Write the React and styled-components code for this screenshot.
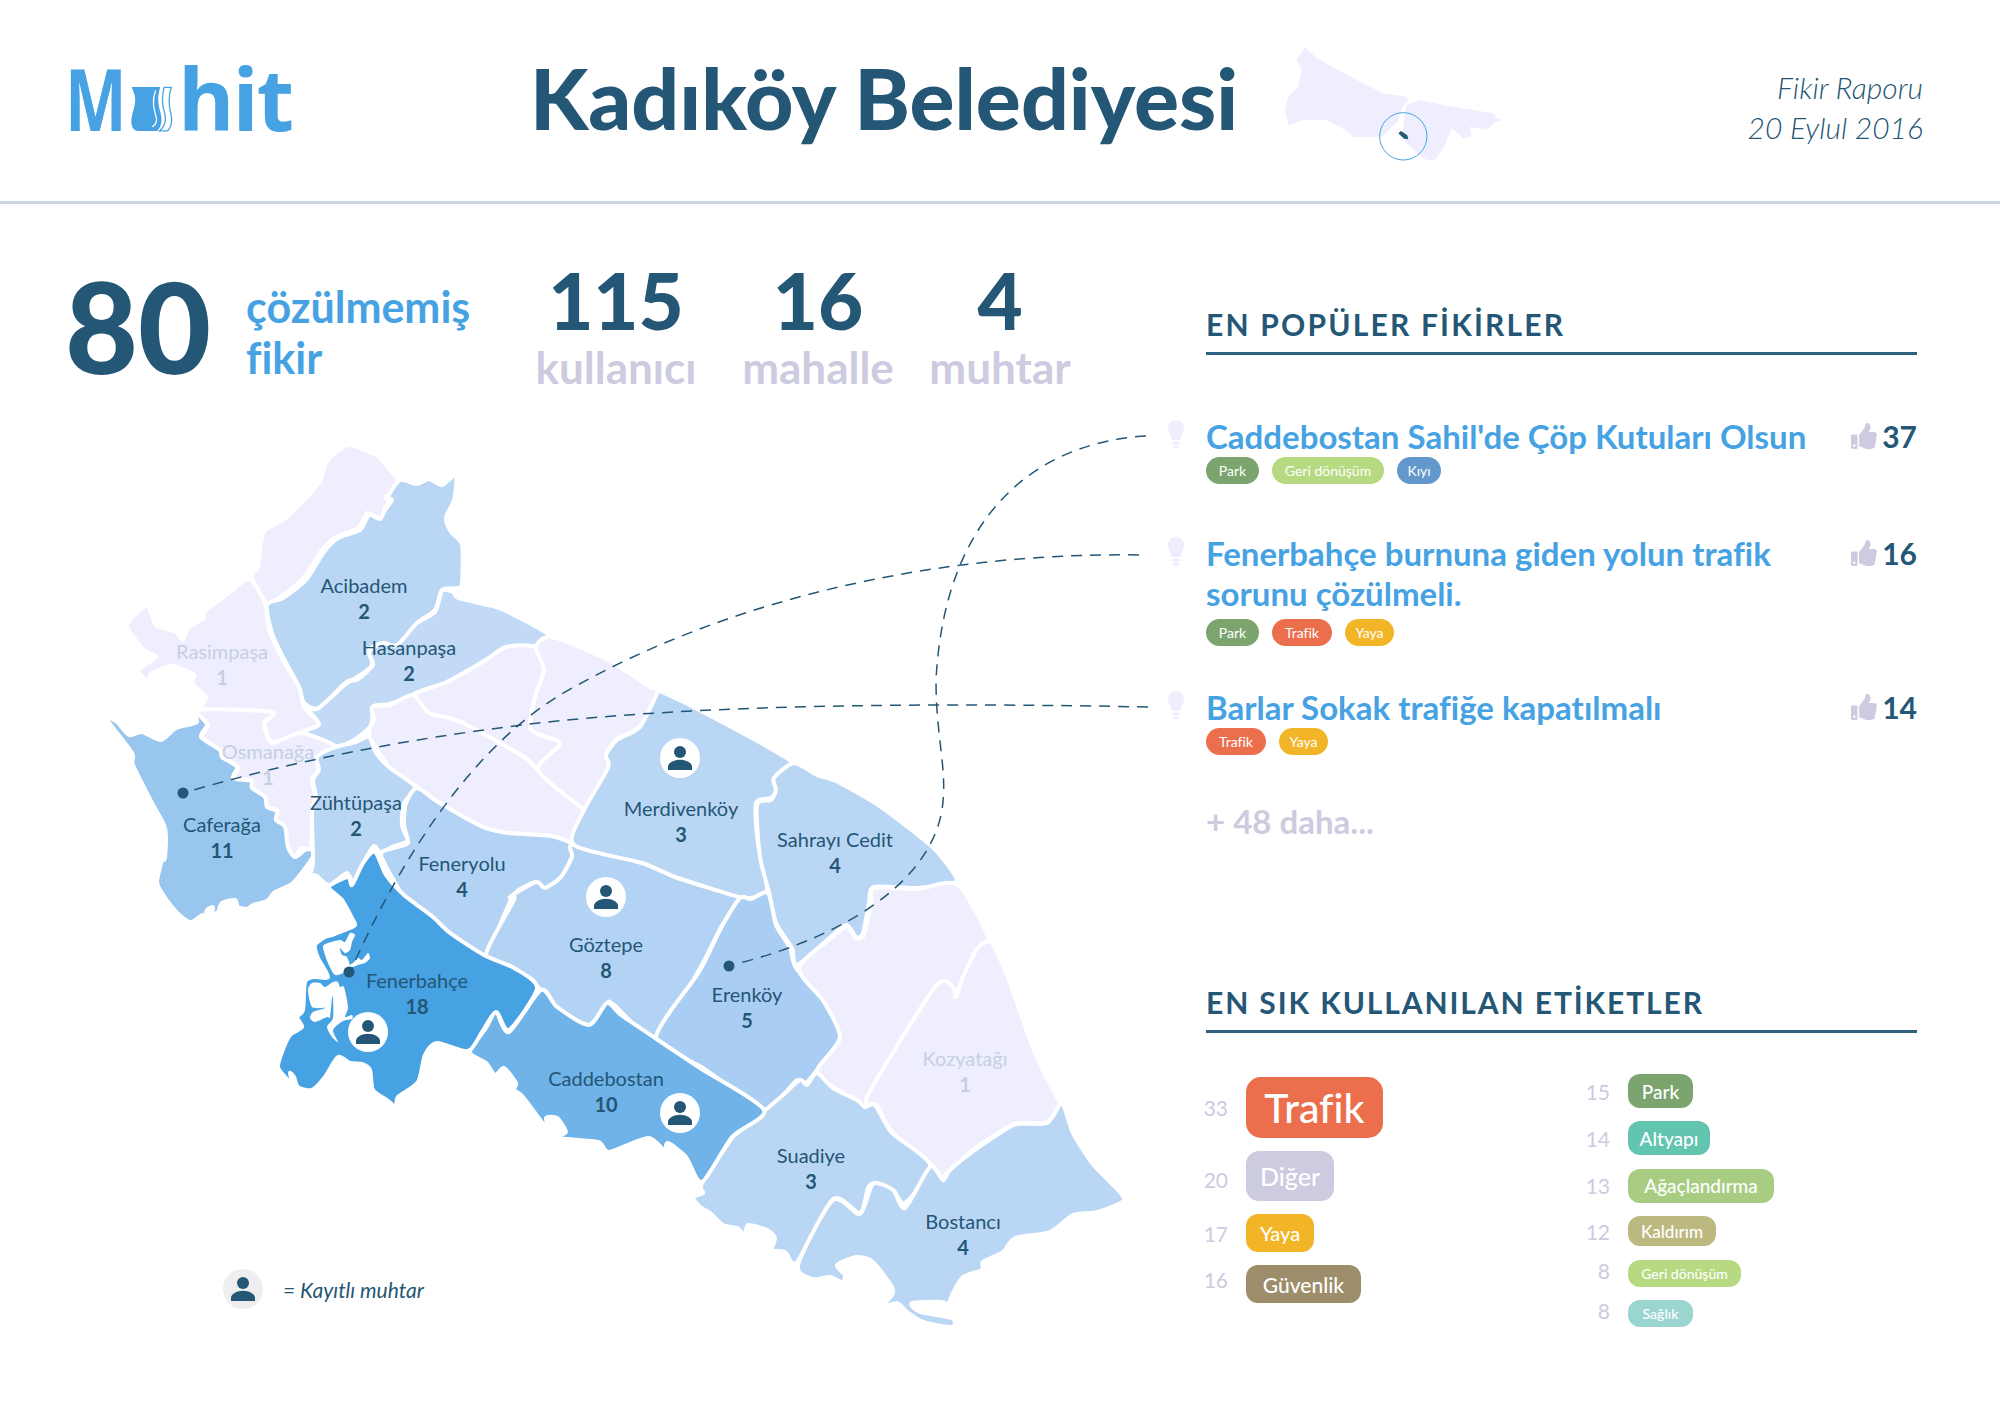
import React from "react";
import styled, { createGlobalStyle } from "styled-components";
import { FaThumbsUp } from "react-icons/fa";

const NAVY = "#245675";
const BLUE = "#46A2E2";
const LILAC = "#CCCBE0";
const PALE = "#EEEEFE";
const SANS = `"Lato", "Noto Sans", sans-serif`;

const Global = createGlobalStyle`
  html, body { margin: 0; padding: 0; background: #fff; }
  body { font-family: ${SANS}; color: ${NAVY}; font-variant-ligatures: none; }
`;

const Page = styled.div`
  width: 2000px;
  height: 1414px;
  overflow: hidden;
`;

/* header */
const Header = styled.header`
  height: 201px;
  display: flex;
  align-items: center;
  padding: 0 77px 0 65px;
  border-bottom: 3px solid #c7d5e3;
`;
const Logo = styled.div`
  width: 465px;
  height: 86px;
  display: flex;
  align-items: flex-end;
  color: ${BLUE};
  font-family: "Open Sans", sans-serif;
  font-weight: 700;
  font-size: 86px;
  line-height: 86px;
  letter-spacing: -2px;
  position: relative;
  top: -3px;
`;
const LogoM = styled.span`
  display: inline-block;
  width: 65px;
  transform: scaleX(0.76);
  transform-origin: 0 50%;
`;
const LogoGlass = styled.svg`
  width: 43px;
  height: 48px;
  margin: 0 5px 8px 0;
`;
const Title = styled.h1`
  width: 740px;
  margin: 0;
  font-size: 84px;
  line-height: 90px;
  font-weight: 900;
  white-space: nowrap;
  position: relative;
  top: -3px;
`;
const MiniMap = styled.svg`
  width: 260px;
  height: 140px;
  position: relative;
  top: -1px;
  flex: none;
`;
const ReportInfo = styled.div`
  margin-left: auto;
  text-align: right;
  font-size: 30px;
  line-height: 40px;
  font-weight: 300;
  font-style: italic;
  white-space: nowrap;
  position: relative;
  top: 6px;
`;

/* main grid */
const Body = styled.main`
  display: grid;
  grid-template-columns: 1168px 749px;
`;
const LeftColumn = styled.div`
  width: 1168px;
`;
const StatsRow = styled.div`
  height: 226px;
  display: flex;
  align-items: flex-start;
  padding-left: 65px;
`;
const BigCount = styled.div`
  width: 181px;
  margin-top: 57px;
  font-size: 126px;
  line-height: 130px;
  font-weight: 900;
`;
const BigLabel = styled.div`
  width: 289px;
  margin-top: 77px;
  color: ${BLUE};
  font-size: 43px;
  line-height: 51px;
  font-weight: 700;
`;
const StatGrid = styled.div`
  display: grid;
  grid-template-columns: 162px 242px 122px;
  justify-items: center;
  margin-top: 52px;
`;
const Stat = styled.div`
  display: flex;
  flex-direction: column;
  align-items: center;
`;
const StatValue = styled.div`
  font-size: 78px;
  line-height: 88px;
  font-weight: 900;
`;
const StatName = styled.div`
  color: ${LILAC};
  font-size: 44px;
  line-height: 46px;
  font-weight: 700;
  white-space: nowrap;
`;

/* map canvas: svg uses page coordinates, labels sit on it */
const MapCanvas = styled.div`
  position: relative;
  width: 1168px;
  height: 984px;
`;
const MapSvg = styled.svg`
  position: absolute;
  left: 0;
  top: 0;
  overflow: visible;
`;
const Label = styled.div`
  position: absolute;
  left: ${(p) => p.$x}px;
  top: ${(p) => p.$y - 430 - 14}px;
  transform: translateX(-50%);
  text-align: center;
  white-space: nowrap;
  font-size: 20px;
  line-height: 26px;
  color: ${(p) => (p.$muted ? "#C5D0E3" : NAVY)};
  b {
    display: block;
    font-weight: 700;
    font-size: 20px;
  }
`;
const Badge = styled.div`
  width: 40px;
  height: 40px;
  border-radius: 50%;
  background: ${(p) => p.$bg || "#fff"};
  display: flex;
  align-items: center;
  justify-content: center;
  flex: none;
`;
const Pin = styled.div`
  position: absolute;
  left: ${(p) => p.$x - 20}px;
  top: ${(p) => p.$y - 430 - 20}px;
`;
const Legend = styled.div`
  position: absolute;
  left: 223px;
  top: 839px;
  display: flex;
  align-items: center;
  gap: 20px;
  font-size: 21px;
  font-weight: 400;
  font-style: italic;
`;

/* right column */
const RightColumn = styled.aside`
  padding-top: 100px;
`;
const SectionTitle = styled.h2`
  margin: ${(p) => p.$top || 0}px 0 0 38px;
  height: 48px;
  border-bottom: 3px solid #2f607f;
  font-size: 30px;
  line-height: 40px;
  font-weight: 700;
  letter-spacing: ${(p) => p.$spacing || 2.2}px;
  white-space: nowrap;
`;
const IdeaList = styled.div`
  margin-top: 62px;
`;
const Idea = styled.article`
  display: grid;
  grid-template-columns: 38px 1fr 66px;
  margin-top: ${(p) => p.$top || 0}px;
`;
const Bulb = styled.svg`
  width: 16px;
  height: 29px;
  margin-top: 3px;
`;
const IdeaBody = styled.div`
  min-width: 0;
`;
const IdeaTitle = styled.h3`
  margin: 0;
  color: ${BLUE};
  font-size: 33px;
  line-height: 40px;
  font-weight: 700;
  position: relative;
  top: -1px;
`;
const PillRow = styled.div`
  display: flex;
  gap: 13px;
  margin-top: ${(p) => p.$top || 0}px;
`;
const Pill = styled.span`
  width: ${(p) => p.$w}px;
  height: 27px;
  border-radius: 14px;
  background: ${(p) => p.$bg};
  color: #fff;
  font-size: 14px;
  font-weight: 400;
  display: flex;
  align-items: center;
  justify-content: center;
  white-space: nowrap;
`;
const Likes = styled.div`
  display: flex;
  align-items: center;
  justify-content: space-between;
  height: 38px;
  font-size: 30px;
  font-weight: 700;
  svg {
    color: ${LILAC};
    width: 26px;
    height: 26px;
  }
`;
const More = styled.div`
  margin: 46px 0 0 38px;
  color: ${LILAC};
  font-size: 33px;
  line-height: 40px;
  font-weight: 700;
`;
const TagColumns = styled.div`
  display: grid;
  grid-template-columns: 364px auto;
  margin: 41px 0 0 38px;
`;
const TagColumn = styled.div`
  display: flex;
  flex-direction: column;
  gap: ${(p) => p.$gap}px;
  padding-top: ${(p) => p.$top || 0}px;
`;
const TagRow = styled.div`
  display: flex;
  align-items: center;
  gap: 18px;
`;
const Count = styled.span`
  width: ${(p) => p.$w}px;
  display: flex;
  justify-content: flex-end;
  color: ${LILAC};
  font-size: 21px;
  position: relative;
  top: ${(p) => p.$shift || 0}px;
`;
const Tag = styled.span`
  width: ${(p) => p.$w}px;
  height: ${(p) => p.$h}px;
  border-radius: ${(p) => p.$r}px;
  background: ${(p) => p.$bg};
  color: #fff;
  font-size: ${(p) => p.$size}px;
  font-weight: 500;
  display: flex;
  align-items: center;
  justify-content: center;
  white-space: nowrap;
`;

// region outlines in page coordinates, traced from the map
const REGIONS = [
  { fill: PALE, pts: "350,445 336,452 326,463 319,483 301,503 283,520 265,530 261,543 258,567 252,577 267,603 283,595 304,577 322,550 336,537 358,528 367,513 381,518 385,508 390,500 386,497 399,482 383,462 376,455" },
  { fill: "#BAD6F5", pts: "267,605 283,598 306,580 324,552 338,538 360,530 369,515 380,519 385,510 392,500 388,497 400,480 417,484 429,479 442,485 456,475 454,500 446,518 451,532 462,545 462,583 458,588 442,590 435,610 417,623 397,647 383,643 369,650 372,665 356,678 345,683 319,708 304,703 299,687 283,657 272,633" },
  { fill: "#C2DAF6", pts: "453,592 458,598 483,604 504,610 549,635 535,646 506,647 486,660 447,682 413,695 390,704 374,706 372,720 369,728 354,740 336,746 304,732 319,724 304,705 317,709 347,683 358,679 373,665 369,652 383,643 397,645 417,623 435,612 442,591" },
  { fill: PALE, pts: "249,579 265,603 269,630 283,660 299,687 304,707 319,724 301,732 272,742 265,723 272,712 204,710 206,697 192,683 194,675 172,666 152,673 147,680 138,670 156,657 144,650 127,625 147,606 156,625 176,632 183,640 188,628 204,618 204,612 229,593" },
  { fill: PALE, pts: "199,710 272,712 264,723 272,743 301,733 336,747 322,760 317,760 318,770 312,780 315,797 312,813 311,848 301,848 295,857 288,847 285,827 276,820 277,810 267,807 265,797 252,788 251,780 233,778 238,767 222,757 220,750 202,737 208,725" },
  { fill: "#99C6EF", pts: "192,709 199,715 207,725 201,737 220,750 222,757 237,767 233,778 251,781 252,788 265,797 267,807 277,811 276,820 285,827 288,847 295,857 305,850 312,850 313,857 293,883 275,892 267,901 253,905 247,909 238,907 235,900 222,903 218,912 212,914 213,907 207,910 205,917 202,915 192,922 183,918 172,907 162,893 157,882 162,860 165,858 165,828 152,803 133,765 132,753 106,718 117,722 129,735 142,732 161,740 176,728 197,722" },
  { fill: PALE, pts: "413,695 447,682 486,660 506,647 535,647 544,670 535,697 531,730 560,743 538,768 524,757 461,722 429,713" },
  { fill: PALE, pts: "372,707 390,705 413,695 429,713 461,722 524,757 538,770 583,810 572,843 551,836 508,833 483,827 438,802 417,787 390,768 369,735 374,720" },
  { fill: PALE, pts: "552,637 608,660 650,687 658,690 640,726 617,739 606,755 608,768 583,812 583,809 538,770 560,743 531,730 535,697 544,670 536,647" },
  { fill: "#BAD6F5", pts: "317,757 333,748 356,742 369,737 376,753 390,768 415,787 404,803 402,825 408,840 404,843 392,847 381,853 374,846 365,860 354,884 347,873 329,885 315,875 308,880 313,863 312,813 316,797 313,780 319,770" },
  { fill: "#B3D3F5", pts: "417,788 438,802 483,827 508,833 551,836 574,845 572,857 561,877 545,888 536,882 515,893 502,920 486,955 450,933 429,917 407,900 401,893 381,855 394,848 408,843 404,825 406,803" },
  { fill: "#B3D3F5", pts: "574,845 642,863 678,878 739,897 721,927 699,970 656,1037 614,1005 607,1003 589,1025 557,1007 541,990 514,968 486,955 514,900 510,897 536,882 545,888 561,877 572,857" },
  { fill: "#BAD6F5", pts: "662,692 703,712 792,762 774,778 776,790 771,798 756,803 758,843 767,890 751,898 739,897 678,878 642,863 574,845 583,812 608,768 606,755 617,740 640,727 658,692" },
  { fill: "#BAD6F5", pts: "794,763 817,775 838,782 881,807 928,843 944,860 956,882 917,888 874,887 869,903 863,933 856,937 847,925 835,933 797,965 792,948 776,923 769,892 760,857 757,805 771,800 776,790 774,778" },
  { fill: "#AACEF3", pts: "740,898 751,899 768,893 776,925 790,948 796,968 824,1000 840,1037 819,1067 806,1083 797,1080 785,1093 764,1110 703,1068 656,1038 699,972 721,928" },
  { fill: PALE, pts: "958,885 990,942 978,948 963,977 956,995 953,987 935,987 871,1095 865,1107 846,1095 817,1072 840,1038 824,1002 799,968 835,935 847,926 856,938 864,935 871,903 874,888 917,889" },
  { fill: PALE, pts: "992,943 1010,983 1035,1053 1060,1103 1062,1102 1047,1122 1017,1123 1000,1132 975,1148 947,1173 943,1180 932,1165 892,1132 877,1105 868,1095 935,987 953,987 956,997 963,977 978,948" },
  { fill: "#BAD6F5", pts: "817,1073 833,1088 857,1100 865,1107 875,1105 892,1133 930,1165 905,1203 893,1190 875,1183 868,1188 860,1213 833,1199 797,1262 785,1252 772,1250 775,1238 767,1230 748,1225 745,1235 737,1228 723,1225 710,1213 700,1207 693,1197 703,1193 702,1183 732,1138 735,1135 763,1112 783,1095 800,1080 807,1085" },
  { fill: "#BAD6F5", pts: "930,1167 943,1180 950,1170 975,1150 1000,1133 1017,1124 1047,1123 1062,1104 1073,1133 1092,1163 1110,1182 1124,1200 1098,1212 1073,1215 1050,1232 1015,1238 1003,1252 983,1262 982,1270 963,1277 953,1293 948,1305 942,1302 912,1303 920,1312 952,1318 952,1327 923,1322 907,1312 897,1303 882,1307 892,1295 892,1287 873,1262 857,1257 837,1265 845,1275 842,1282 830,1277 813,1279 798,1265 833,1200 860,1214 873,1184 893,1190 905,1208" },
  { fill: "#6FB3E9", pts: "541,990 557,1007 589,1025 607,1003 621,1015 655,1038 700,1068 764,1110 732,1137 702,1182 686,1157 668,1143 664,1150 648,1138 609,1152 598,1142 557,1138 566,1132 557,1118 546,1118 548,1130 523,1097 514,1090 516,1083 504,1068 495,1075 486,1063 470,1052 486,1028 496,1012 509,1032" },
  { fill: BLUE, pts: "329,887 348,877 352,885 363,863 375,852 386,875 404,895 433,917 450,933 484,955 514,968 537,988 509,1030 496,1012 482,1032 468,1051 437,1043 425,1055 418,1082 398,1097 396,1107 387,1100 373,1090 370,1070 362,1064 350,1063 338,1057 325,1077 312,1090 298,1087 294,1077 290,1073 292,1083 285,1077 278,1067 282,1052 290,1035 302,1027 297,1017 303,1010 305,982 313,977 328,977 318,958 315,945 325,937 332,935 350,928 355,925 353,920 342,900" },
];

// white harbour cut-outs inside Fenerbahce
const HARBOURS = [
  "328,943 340,940 345,942 350,933 355,935 352,942 350,950 345,953 340,948 342,955 347,957 350,967 345,972 335,975 328,963 323,947",
  "350,965 353,963 358,958 362,960 368,953 370,958 365,963 358,965 350,968",
  "312,983 308,990 312,1007 325,1008 313,1012 310,1018 315,1022 327,1017 330,1017 332,998 333,998 333,1018 327,1027 332,1037 338,1042 333,1030 343,1021 352,1019 352,1015 345,1017 348,1007 344,987 340,987 338,982 333,982 325,987 320,983",
];

// closed catmull-rom through the traced points
function outline(str) {
  const p = str.split(" ").map((s) => s.split(",").map(Number));
  const n = p.length;
  let d = `M${p[0][0]} ${p[0][1]}`;
  for (let i = 0; i < n; i++) {
    const a = p[(i - 1 + n) % n];
    const b = p[i];
    const c = p[(i + 1) % n];
    const e = p[(i + 2) % n];
    const k = 1 / 8;
    const c1 = [b[0] + (c[0] - a[0]) * k, b[1] + (c[1] - a[1]) * k];
    const c2 = [c[0] - (e[0] - b[0]) * k, c[1] - (e[1] - b[1]) * k];
    d += ` C${c1[0]} ${c1[1]} ${c2[0]} ${c2[1]} ${c[0]} ${c[1]}`;
  }
  return d + "Z";
}

const LINKS = [
  "M1146 436 C1040 442 945 510 936 680 C936 740 948 770 942 810 C930 880 850 935 736 964",
  "M1139 555 C960 552 740 590 560 695 C470 750 400 860 351 970",
  "M1148 707 C950 703 700 703 522 725 C400 740 290 762 190 791",
];

const DOTS = [
  [183, 793],
  [349, 972],
  [729, 966],
];

const LABELS = [
  ["Acibadem", 2, 364, 586],
  ["Rasimpaşa", 1, 222, 652, true],
  ["Osmanağa", 1, 268, 752, true],
  ["Hasanpaşa", 2, 409, 648],
  ["Zühtüpaşa", 2, 356, 803],
  ["Caferağa", 11, 222, 825],
  ["Feneryolu", 4, 462, 864],
  ["Merdivenköy", 3, 681, 809],
  ["Sahrayı Cedit", 4, 835, 840],
  ["Göztepe", 8, 606, 945],
  ["Erenköy", 5, 747, 995],
  ["Caddebostan", 10, 606, 1079],
  ["Fenerbahçe", 18, 417, 981],
  ["Kozyatağı", 1, 965, 1059, true],
  ["Suadiye", 3, 811, 1156],
  ["Bostancı", 4, 963, 1222],
];

const MUHTARS = [
  [680, 758],
  [606, 897],
  [680, 1113],
  [368, 1032],
];

const TAG = {
  Park: { w: 53, bg: "#7CA46F" },
  Geri: { w: 112, bg: "#B6D982", text: "Geri dönüşüm" },
  Kiyi: { w: 44, bg: "#6398CC", text: "Kıyı" },
  Trafik: { w: 60, bg: "#EC6F4D" },
  Yaya: { w: 49, bg: "#F3B528" },
};

const IDEAS = [
  { title: "Caddebostan Sahil'de Çöp Kutuları Olsun", likes: 37, tags: ["Park", "Geri", "Kiyi"] },
  { title: "Fenerbahçe burnuna giden yolun trafik sorunu çözülmeli.", likes: 16, tags: ["Park", "Trafik", "Yaya"], top: 50, pillTop: 5 },
  { title: "Barlar Sokak trafiğe kapatılmalı", likes: 14, tags: ["Trafik", "Yaya"], top: 42 },
];

const LEFT_TAGS = [
  { n: 33, name: "Trafik", w: 137, h: 61, r: 15, size: 41, bg: "#EC6F4D" },
  { n: 20, name: "Diğer", w: 88, h: 50, r: 13, size: 25, bg: LILAC, shift: 3 },
  { n: 17, name: "Yaya", w: 68, h: 38, r: 12, size: 20, bg: "#F3B528" },
  { n: 16, name: "Güvenlik", w: 115, h: 38, r: 12, size: 21, bg: "#9D8D6A", shift: -5 },
];

const RIGHT_TAGS = [
  { n: 15, name: "Park", w: 65, h: 34, r: 12, size: 19, bg: "#7CA46F" },
  { n: 14, name: "Altyapı", w: 82, h: 34, r: 12, size: 19, bg: "#62C5B0" },
  { n: 13, name: "Ağaçlandırma", w: 146, h: 34, r: 12, size: 19, bg: "#A8CD82" },
  { n: 12, name: "Kaldırım", w: 88, h: 30, r: 12, size: 17, bg: "#BBB97F" },
  { n: 8, name: "Geri dönüşüm", w: 113, h: 27, r: 12, size: 14, bg: "#B6D982", shift: -3 },
  { n: 8, name: "Sağlık", w: 65, h: 27, r: 12, size: 14, bg: "#9AD6CF", shift: -3 },
];

function Person({ color = NAVY }) {
  return (
    <svg width="24" height="24" viewBox="0 0 22 22" fill={color}>
      <circle cx="11" cy="5.5" r="5.5" />
      <path d="M0 22v-3c0-4 6-6.5 11-6.5S22 15 22 19v3z" />
    </svg>
  );
}

function IdeaBulb() {
  return (
    <Bulb viewBox="0 0 16 29" fill={PALE}>
      <path d="M8 0C3.5 0 0 3.4 0 7.8 0 12 3 15 3.8 20h8.4C13 15 16 12 16 7.8 16 3.4 12.500 0 8 0z" />
      <rect x="4" y="21.500" width="8" height="3" rx="1" />
      <rect x="5" y="25.500" width="6" height="3" rx="1.500" />
    </Bulb>
  );
}

function TagLine({ n, name, w, h, r, size, bg, shift, countWidth }) {
  return (
    <TagRow>
      <Count $w={countWidth} $shift={shift}>{n}</Count>
      <Tag $w={w} $h={h} $r={r} $size={size} $bg={bg}>{name}</Tag>
    </TagRow>
  );
}

function App() {
  return (
    <Page>
      <Global />
      <Header>
        <Logo>
          <LogoM>M</LogoM>
          <LogoGlass viewBox="250 132 135 148">
            <path fill={BLUE} d="M255 137H345C335 170 338 190 345 215C352 240 350 262 335 275H278C258 275 252 258 255 235C258 210 268 195 266 172C265 160 260 148 255 137Z" />
            <path fill="none" stroke="#fff" strokeWidth="4" d="M330 148C318 185 325 205 332 230C336 245 332 255 320 262" />
            <path fill="none" stroke={BLUE} strokeWidth="4" d="M357 138H380C368 170 372 195 378 220C384 245 380 262 368 275H342C358 262 365 240 358 215C350 190 350 165 357 138Z" />
          </LogoGlass>
          hit
        </Logo>
        <Title>Kadıköy Belediyesi</Title>
        <MiniMap viewBox="0 0 780 420">
          <path fill={PALE} d="M105 52L140 85 260 150 340 190 410 200 415 212 395 235 385 270 335 320 250 322 235 305 170 270 100 270 55 285 45 240 55 200 85 170 95 120 80 88Z" />
          <path fill={PALE} d="M410 225L450 210 520 225 575 235 670 250 680 265 695 270 670 280 650 300 600 290 605 320 580 325 545 295 525 345 495 390 470 390 450 375 415 345 395 320 400 290Z" />
          <circle cx="400" cy="319" r="71" fill="none" stroke={BLUE} strokeWidth="3" />
          <path fill={NAVY} d="M385 310L393 303 412 316 415 328 402 326Z" />
        </MiniMap>
        <ReportInfo>
          Fikir Raporu
          <br />
          20 Eylul 2016
        </ReportInfo>
      </Header>
      <Body>
        <LeftColumn>
          <StatsRow>
            <BigCount>80</BigCount>
            <BigLabel>
              çözülmemiş
              <br />
              fikir
            </BigLabel>
            <StatGrid>
              <Stat>
                <StatValue>115</StatValue>
                <StatName>kullanıcı</StatName>
              </Stat>
              <Stat>
                <StatValue>16</StatValue>
                <StatName>mahalle</StatName>
              </Stat>
              <Stat>
                <StatValue>4</StatValue>
                <StatName>muhtar</StatName>
              </Stat>
            </StatGrid>
          </StatsRow>
          <MapCanvas>
            <MapSvg width="1168" height="984" viewBox="0 430 1168 984">
              {REGIONS.map((r, i) => (
                <path key={i} d={outline(r.pts)} fill={r.fill} stroke="#fff" strokeWidth="4" strokeLinejoin="round" />
              ))}
              {HARBOURS.map((h, i) => (
                <path key={i} d={outline(h)} fill="#fff" />
              ))}
              {LINKS.map((d, i) => (
                <path key={i} d={d} fill="none" stroke={NAVY} strokeWidth="1.500" strokeDasharray="11 8" />
              ))}
              {DOTS.map(([x, y], i) => (
                <circle key={i} cx={x} cy={y} r="5.500" fill={NAVY} />
              ))}
            </MapSvg>
            {LABELS.map(([name, n, x, y, muted]) => (
              <Label key={name} $x={x} $y={y} $muted={muted}>
                {name}
                <b>{n}</b>
              </Label>
            ))}
            {MUHTARS.map(([x, y]) => (
              <Pin key={x + "-" + y} $x={x} $y={y}>
                <Badge>
                  <Person />
                </Badge>
              </Pin>
            ))}
            <Legend>
              <Badge $bg="#EEEEEE">
                <Person />
              </Badge>
              = Kayıtlı muhtar
            </Legend>
          </MapCanvas>
        </LeftColumn>
        <RightColumn>
          <SectionTitle>EN POPÜLER FİKİRLER</SectionTitle>
          <IdeaList>
            {IDEAS.map((idea) => (
              <Idea key={idea.likes} $top={idea.top}>
                <IdeaBulb />
                <IdeaBody>
                  <IdeaTitle>{idea.title}</IdeaTitle>
                  <PillRow $top={idea.pillTop}>
                    {idea.tags.map((t) => (
                      <Pill key={t} $w={TAG[t].w} $bg={TAG[t].bg}>
                        {TAG[t].text || t}
                      </Pill>
                    ))}
                  </PillRow>
                </IdeaBody>
                <Likes>
                  <FaThumbsUp />
                  {idea.likes}
                </Likes>
              </Idea>
            ))}
          </IdeaList>
          <More>+ 48 daha...</More>
          <SectionTitle $top={141} $spacing={1.9}>EN SIK KULLANILAN ETİKETLER</SectionTitle>
          <TagColumns>
            <TagColumn $top={3} $gap={13}>
              {LEFT_TAGS.map((t) => (
                <TagLine key={t.name} {...t} countWidth={22} />
              ))}
            </TagColumn>
            <TagColumn $gap={13.4}>
              {RIGHT_TAGS.map((t) => (
                <TagLine key={t.name} {...t} countWidth={40} />
              ))}
            </TagColumn>
          </TagColumns>
        </RightColumn>
      </Body>
    </Page>
  );
}

export default App;
